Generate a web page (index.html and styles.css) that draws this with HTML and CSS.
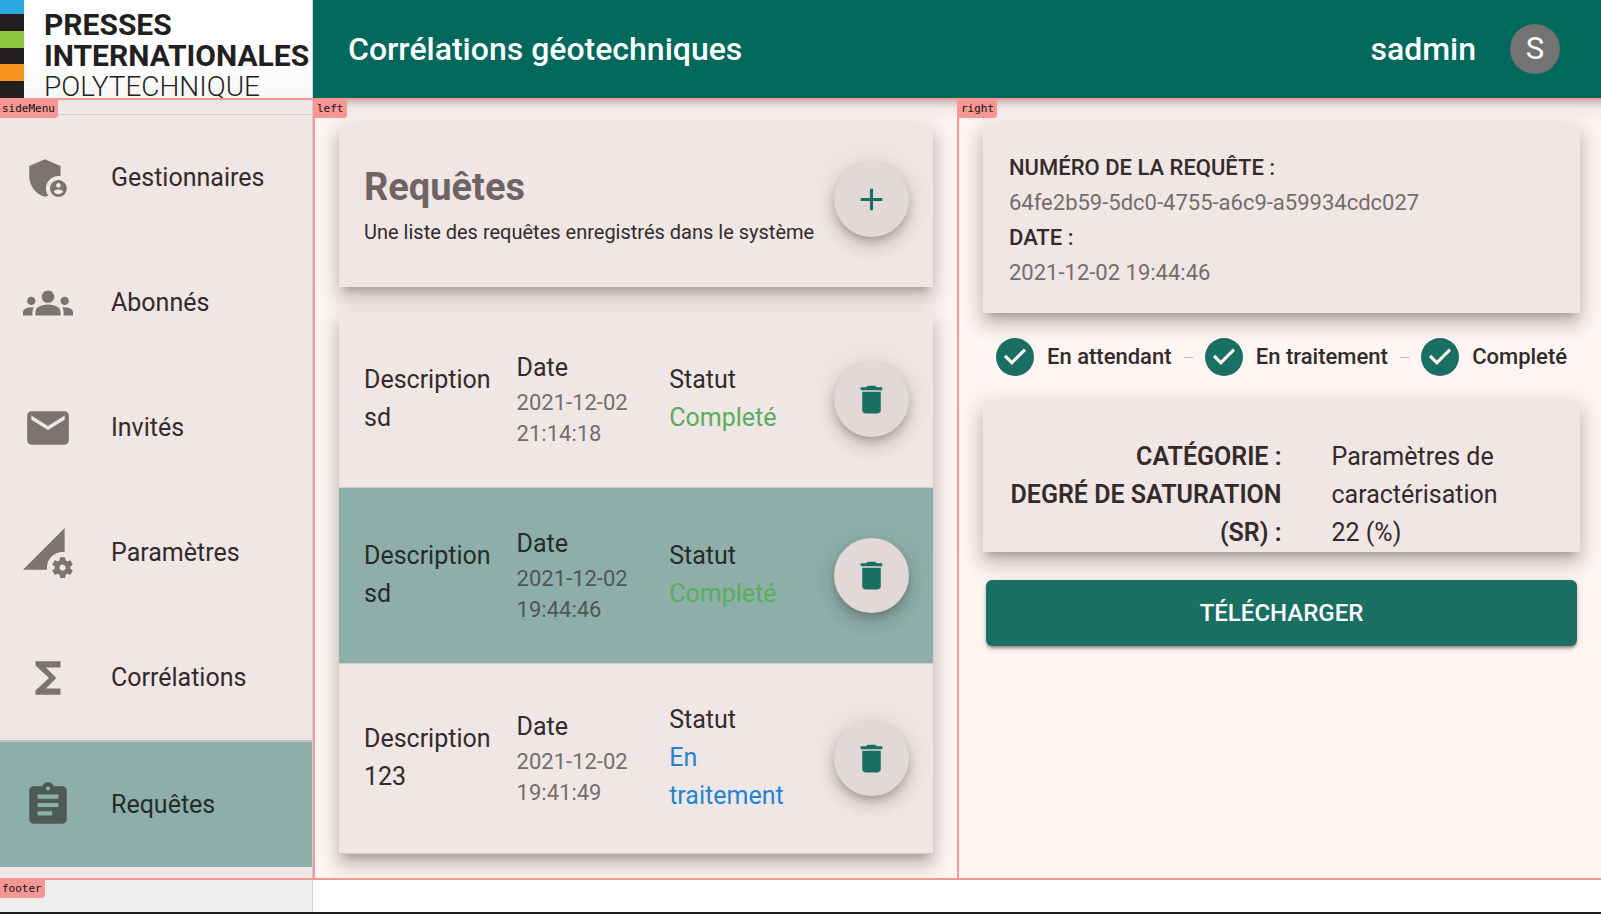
FILE: index.html
```html
<!DOCTYPE html>
<html lang="fr">
<head>
<meta charset="utf-8">
<title>Corrélations géotechniques</title>
<link rel="stylesheet" href="styles.css">
</head>
<body>
<svg class="sprite" aria-hidden="true">
  <symbol id="i-delete" viewBox="0 0 24 24"><path d="M6 19c0 1.1.9 2 2 2h8c1.1 0 2-.9 2-2V7H6v12zM19 4h-3.5l-1-1h-5l-1 1H5v2h14V4z"/></symbol>
  <symbol id="i-step" viewBox="0 0 24 24"><path d="M12 0a12 12 0 1 0 0 24 12 12 0 0 0 0-24zm-2 17l-5-5 1.4-1.4 3.6 3.6 7.6-7.6L19 8l-9 9z"/></symbol>
</svg>
<div class="app">
  <header class="top">
    <div class="logo">
      <div class="logo-bars"><i class="blue"></i><i></i><i class="green"></i><i></i><i class="orange"></i><i></i></div>
      <div class="logo-text"><span>PRESSES</span><span>INTERNATIONALES</span><span class="thin">POLYTECHNIQUE</span></div>
    </div>
    <div class="appbar">
      <h1 class="app-title">Corrélations géotechniques</h1>
      <span class="user">sadmin</span>
      <span class="avatar">S</span>
    </div>
  </header>

  <div class="main">
    <nav class="side area">
      <span class="tag">sideMenu</span>
      <ul class="menu">
        <li><a class="menu-item" href="#"><svg class="menu-icon" viewBox="0 0 24 24"><path d="M17 11c.34 0 .67.04 1 .09V6.27L10.5 3 3 6.27v4.91c0 4.54 3.2 8.79 7.5 9.82.55-.13 1.08-.32 1.6-.55-.69-.98-1.1-2.17-1.1-3.45 0-3.31 2.69-6 6-6z"/><path d="M17 13c-2.21 0-4 1.79-4 4s1.79 4 4 4 4-1.79 4-4-1.79-4-4-4zm0 1.38c.62 0 1.12.51 1.12 1.12s-.51 1.12-1.12 1.12-1.12-.51-1.12-1.12.5-1.12 1.12-1.12zm0 5.37c-.93 0-1.74-.46-2.24-1.17.05-.72 1.51-1.08 2.24-1.08s2.19.36 2.24 1.08c-.5.71-1.31 1.17-2.24 1.17z"/></svg>Gestionnaires</a></li>
        <li><a class="menu-item" href="#"><svg class="menu-icon" viewBox="0 0 24 24"><path d="M12 12.75c1.63 0 3.07.39 4.24.9 1.08.48 1.76 1.56 1.76 2.73V18H6v-1.61c0-1.18.68-2.26 1.76-2.73 1.17-.52 2.61-.91 4.24-.91zM4 13c1.1 0 2-.9 2-2s-.9-2-2-2-2 .9-2 2 .9 2 2 2zm1.13 1.1c-.37-.06-.74-.1-1.13-.1-.99 0-1.93.21-2.78.58C.48 14.9 0 15.62 0 16.43V18h4.5v-1.61c0-.83.23-1.61.63-2.29zM20 13c1.1 0 2-.9 2-2s-.9-2-2-2-2 .9-2 2 .9 2 2 2zm4 3.43c0-.81-.48-1.53-1.22-1.85-.85-.37-1.79-.58-2.78-.58-.39 0-.76.04-1.13.1.4.68.63 1.46.63 2.29V18H24v-1.57zM12 6c1.66 0 3 1.34 3 3s-1.34 3-3 3-3-1.34-3-3 1.34-3 3-3z"/></svg>Abonnés</a></li>
        <li><a class="menu-item" href="#"><svg class="menu-icon" viewBox="0 0 24 24"><path d="M20 4H4c-1.1 0-1.99.9-1.99 2L2 18c0 1.1.9 2 2 2h16c1.1 0 2-.9 2-2V6c0-1.1-.9-2-2-2zm0 4-8 5-8-5V6l8 5 8-5v2z"/></svg>Invités</a></li>
        <li><a class="menu-item" href="#"><svg class="menu-icon" viewBox="0 0 24 24"><path d="M18.99 11.5c.34 0 .67.03 1 .07L20 0 0 20h11.56c-.04-.33-.07-.66-.07-1 0-4.14 3.36-7.5 7.5-7.5zm3.71 7.99c.02-.16.04-.32.04-.49 0-.17-.01-.33-.04-.49l1.06-.83c.09-.08.12-.21.06-.32l-1-1.73c-.06-.11-.19-.15-.31-.11l-1.24.5c-.26-.2-.54-.37-.85-.49l-.19-1.32c-.01-.12-.12-.21-.24-.21h-2c-.12 0-.23.09-.25.21l-.19 1.32c-.3.13-.59.29-.85.49l-1.24-.5c-.11-.04-.24 0-.31.11l-1 1.73c-.06.11-.04.24.06.32l1.06.83c-.02.16-.03.32-.03.49 0 .17.01.33.03.49l-1.06.83c-.09.08-.12.21-.06.32l1 1.73c.06.11.19.15.31.11l1.24-.5c.26.2.54.37.85.49l.19 1.32c.02.12.12.21.25.21h2c.12 0 .23-.09.25-.21l.19-1.32c.3-.13.59-.29.84-.49l1.25.5c.11.04.24 0 .31-.11l1-1.73c.06-.11.03-.24-.06-.32l-1.07-.83zm-3.71 1.01c-.83 0-1.5-.67-1.5-1.5s.67-1.5 1.5-1.5 1.5.67 1.5 1.5-.67 1.5-1.5 1.5z"/></svg>Paramètres</a></li>
        <li><a class="menu-item" href="#"><svg class="menu-icon" viewBox="0 0 24 24"><path d="M18 4H6v2l6.5 6L6 18v2h12v-3h-7l5-5-5-5h7z"/></svg>Corrélations</a></li>
        <li><a class="menu-item selected" href="#" aria-current="page"><svg class="menu-icon" viewBox="0 0 24 24"><path d="M19 3h-4.18C14.4 1.84 13.3 1 12 1c-1.3 0-2.4.84-2.82 2H5c-1.1 0-2 .9-2 2v14c0 1.1.9 2 2 2h14c1.1 0 2-.9 2-2V5c0-1.1-.9-2-2-2zm-7 0c.55 0 1 .45 1 1s-.45 1-1 1-1-.45-1-1 .45-1 1-1zm2 14H7v-2h7v2zm3-4H7v-2h10v2zm0-4H7V7h10v2z"/></svg>Requêtes</a></li>
      </ul>
    </nav>

    <section class="left area">
      <span class="tag">left</span>
      <div class="card intro">
        <div>
          <h2 class="intro-title">Requêtes</h2>
          <p class="intro-sub">Une liste des requêtes enregistrés dans le système</p>
        </div>
        <button class="fab" type="button" aria-label="Ajouter"><svg viewBox="0 0 24 24"><path d="M19 13h-6v6h-2v-6H5v-2h6V5h2v6h6v2z"/></svg></button>
      </div>
      <ul class="card requests">
        <li class="request">
          <div class="cell"><div>Description</div><div>sd</div></div>
          <div class="cell"><div>Date</div><div class="date">2021-12-02 21:14:18</div></div>
          <div class="cell"><div>Statut</div><div class="done">Completé</div></div>
          <button class="fab" type="button" aria-label="Supprimer"><svg><use href="#i-delete"/></svg></button>
        </li>
        <li class="request selected">
          <div class="cell"><div>Description</div><div>sd</div></div>
          <div class="cell"><div>Date</div><div class="date">2021-12-02 19:44:46</div></div>
          <div class="cell"><div>Statut</div><div class="done">Completé</div></div>
          <button class="fab" type="button" aria-label="Supprimer"><svg><use href="#i-delete"/></svg></button>
        </li>
        <li class="request">
          <div class="cell"><div>Description</div><div>123</div></div>
          <div class="cell"><div>Date</div><div class="date">2021-12-02 19:41:49</div></div>
          <div class="cell"><div>Statut</div><div class="pending">En traitement</div></div>
          <button class="fab" type="button" aria-label="Supprimer"><svg><use href="#i-delete"/></svg></button>
        </li>
      </ul>
    </section>

    <section class="right area">
      <span class="tag">right</span>
      <dl class="card summary">
        <dt>NUMÉRO DE LA REQUÊTE :</dt>
        <dd>64fe2b59-5dc0-4755-a6c9-a59934cdc027</dd>
        <dt>DATE :</dt>
        <dd>2021-12-02 19:44:46</dd>
      </dl>
      <div class="stepper">
        <div class="step"><svg><use href="#i-step"/></svg>En attendant</div>
        <span class="connector"></span>
        <div class="step"><svg><use href="#i-step"/></svg>En traitement</div>
        <span class="connector"></span>
        <div class="step"><svg><use href="#i-step"/></svg>Completé</div>
      </div>
      <div class="card details">
        <div class="detail-labels"><div>CATÉGORIE :</div><div>DEGRÉ DE SATURATION (SR) :</div></div>
        <div class="detail-values"><div>Paramètres de caractérisation</div><div>22 (%)</div></div>
      </div>
      <button class="download" type="button">TÉLÉCHARGER</button>
    </section>
  </div>

  <footer class="footer area">
    <span class="tag">footer</span>
    <div class="footer-side"></div>
  </footer>
</div>
</body>
</html>
```
FILE: styles.css
```css
* { box-sizing: border-box; }

:root {
  --side: 313px;
  --paper: #efe6e5;
  --teal: #1a6f63;
  --mark: #f69795;
  --rule: #d2cccb;
  --ink: #332b2a;
  --muted: #766c6b;
}

body {
  margin: 0;
  background: #fff5f3;
  color: var(--ink);
  font: 400 25px/38px Roboto, "Liberation Sans", sans-serif;
}

ul, dl, dd, h1, h2, p { margin: 0; padding: 0; }
ul { list-style: none; }
svg { fill: currentColor; flex: none; }
.sprite { display: none; }

.app {
  min-height: 100vh;
  display: grid;
  grid-template-rows: auto 1fr auto;
}

/* Header */
.top {
  display: flex;
  height: 98px;
}
.logo {
  width: var(--side);
  flex: none;
  display: flex;
  gap: 20px;
  background: linear-gradient(#fff 60%, #f6f6f6);
  border-right: 1px solid #d8d8d8;
}
.logo-bars { width: 24px; display: grid; grid-template-rows: 14px repeat(5, 1fr); }
.logo-bars i { background: #231f20; }
.logo-bars .blue { background: #29abe2; }
.logo-bars .green { background: #8cc63f; }
.logo-bars .orange { background: #f7931e; }
.logo-text {
  display: flex;
  flex-direction: column;
  padding-top: 9px;
  font-size: 30px;
  line-height: 31px;
  font-weight: 700;
  color: #231f20;
}
.logo-text .thin { font-size: 28px; font-weight: 300; }
.appbar {
  flex: 1;
  display: flex;
  align-items: center;
  padding: 0 41px 0 35px;
  background: #00695b;
  color: #fff;
}
.app-title { flex: 1; font-size: 32px; font-weight: 500; }
.user { font-size: 32px; font-weight: 500; margin-right: 34px; }
.avatar {
  width: 50px;
  height: 50px;
  border-radius: 50%;
  background: #737373;
  font-size: 31px;
  line-height: 50px;
  text-align: center;
}

/* Named layout areas with their outlines */
.main {
  display: grid;
  grid-template-columns: var(--side) 1fr 1fr;
}
.area { position: relative; border-top: 2px solid var(--mark); }
.left, .right {
  border-left: 2px solid var(--mark);
  padding: 24px;
  background: linear-gradient(rgba(70, 60, 60, .3), rgba(90, 60, 60, .07) 8px, rgba(90, 60, 60, 0) 22px);
}
.tag {
  position: absolute;
  top: -2px;
  left: 0;
  height: 20px;
  padding: 0 3px 0 2px;
  background: var(--mark);
  border-bottom-right-radius: 3px;
  color: #111;
  font: 11px/22px "DejaVu Sans Mono", monospace;
}
.left .tag, .right .tag { left: -2px; padding: 0 3px 0 4px; }

/* Side menu */
.side {
  background: var(--paper);
  border-right: 1px solid var(--rule);
  padding-bottom: 10px;
}
.menu { margin-top: 14px; border-top: 1px solid var(--rule); }
.menu-item {
  display: flex;
  align-items: center;
  gap: 38px;
  height: 125px;
  padding-left: 23px;
  color: inherit;
  text-decoration: none;
}
.menu-icon { width: 50px; height: 50px; color: #7d7271; }
.menu-item.selected { background: #8eafa9; border-top: 2px solid #c3c4c1; height: 127px; color: #252c2a; }
.menu-item.selected .menu-icon { color: #4e5a56; }

/* Cards */
.card {
  background: var(--paper);
  box-shadow: 0 8px 8px -5px rgba(50, 40, 40, .26), 0 12px 16px 2px rgba(50, 40, 40, .15), 0 5px 22px 3px rgba(50, 40, 40, .13);
}
.fab {
  width: 75px;
  height: 75px;
  flex: none;
  display: grid;
  place-items: center;
  padding: 0;
  border: 0;
  border-radius: 50%;
  background: #e1d8d7;
  color: var(--teal);
  box-shadow: 0 5px 8px -2px rgba(50, 40, 40, .28), 0 9px 16px 0 rgba(50, 40, 40, .14), 0 2px 28px 0 rgba(50, 40, 40, .12);
}
.fab svg { width: 37px; height: 37px; }

.intro {
  display: flex;
  justify-content: space-between;
  align-items: flex-start;
  padding: 38px 24px 35px 25px;
  margin-bottom: 25px;
}
.intro-title { font-size: 38px; line-height: 50px; font-weight: 700; color: #6e6463; }
.intro-sub { font-size: 20px; line-height: 40px; white-space: nowrap; }

.request {
  display: grid;
  grid-template-columns: 28% 28% 28% 1fr;
  align-items: center;
  padding: 37px 24px 38px 25px;
  border-bottom: 1px solid var(--rule);
}
.request.selected { background: #8eafa9; color: #252c2a; }
.request .fab { justify-self: end; }
.cell { padding-right: 24px; }
.date { font-size: 22px; line-height: 31px; color: var(--muted); }
.selected .date { color: #4d5855; }
.done { color: #59ad5b; }
.pending { color: #1f86cf; }

/* Right panel */
.right { padding-right: 21px; }
.summary { padding: 26px 26px 23px; font-size: 22px; line-height: 35px; }
.summary dt { font-weight: 500; }
.summary dd { color: var(--muted); }

.stepper {
  display: flex;
  align-items: center;
  gap: 12px;
  padding: 25px 13px;
  font-size: 22px;
  font-weight: 500;
}
.step { display: flex; align-items: center; gap: 13px; white-space: nowrap; }
.step svg { width: 38px; height: 38px; color: var(--teal); }
.connector { flex: 1; border-top: 1px solid #bdbdbd; }

.details {
  display: grid;
  grid-template-columns: 1fr 1fr;
  padding: 37px 0 0;
}
.detail-labels { text-align: right; font-weight: 600; }
.detail-values { padding-left: 50px; }

.download {
  display: block;
  width: calc(100% - 6px);
  margin: 28px 3px 0;
  padding: 15px;
  border: 0;
  border-radius: 6px;
  background: var(--teal);
  color: #fff;
  font: 500 24px/36px Roboto, "Liberation Sans", sans-serif;
  box-shadow: 0 3px 3px -1px rgba(60, 30, 30, .4), 0 2px 6px rgba(60, 30, 30, .2);
}

/* Footer */
.footer { background: #fff; border-bottom: 2px solid #1c1b1f; }
.footer-side {
  width: var(--side);
  height: 32px;
  background: #eee;
  border-right: 1px solid #d0d0d0;
}
```
